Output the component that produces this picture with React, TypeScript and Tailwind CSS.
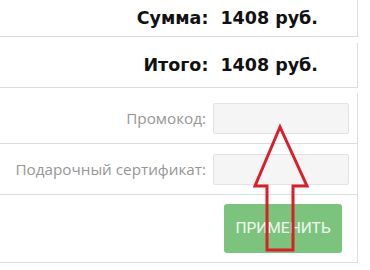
import React from 'react';

const total = '1408 руб.';

const App = () => {
  return (
    <div className="relative w-[370px] h-[270px] overflow-hidden bg-white">
      <div className="flex flex-col w-[358px]">
        {/* Sum */}
        <div className="flex h-[37px] items-center justify-end border-b border-r border-[#dcdcdc] pr-[39px] text-[17.5px] font-bold text-[#111] font-['DejaVu_Sans',sans-serif]">
          <span>Сумма:</span>
          <span className="ml-[12px]">{total}</span>
        </div>

        {/* Total */}
        <div className="mt-[6px] flex h-[45px] items-center justify-end border-b border-r border-[#dcdcdc] pr-[39px] text-[17.5px] font-bold text-[#111] font-['DejaVu_Sans',sans-serif]">
          <span>Итого:</span>
          <span className="ml-[12px]">{total}</span>
        </div>

        {/* Promo */}
        <div className="mt-[5px] flex flex-col border-r border-[#dcdcdc] font-['Open_Sans',sans-serif]">
          <div className="flex h-[51px] items-center justify-end gap-[7px] border-b border-[#dcdcdc] pr-[8px]">
            <label className="text-[15.25px] text-[#969696]">Промокод:</label>
            <div className="h-[31px] w-[136px] rounded-[2px] border border-[#e3e3e3] bg-[#f5f5f5]" />
          </div>
          <div className="flex h-[51px] items-center justify-end gap-[7px] border-b border-[#dcdcdc] pr-[8px]">
            <label className="text-[15.25px] text-[#969696]">Подарочный сертификат:</label>
            <div className="h-[31px] w-[136px] rounded-[2px] border border-[#e3e3e3] bg-[#f5f5f5]" />
          </div>
          <div className="flex h-[68px] justify-end border-b border-[#dcdcdc] pr-[15px] pt-[9px]">
            <button className="h-[49px] w-[118px] rounded-[3px] bg-[#7cc47d] text-[15.5px] text-white/90 font-['Roboto',sans-serif]">
              ПРИМЕНИТЬ
            </button>
          </div>
        </div>
      </div>

      {/* Arrow annotation */}
      <svg className="absolute left-0 top-0" width="370" height="270" viewBox="0 0 370 270">
        <polygon
          points="280,127 255,186 267,186 267,250 293,250 293,186 307,186"
          fill="none"
          stroke="#d8202a"
          strokeWidth="3"
          strokeLinejoin="miter"
        />
      </svg>
    </div>
  );
};

export default App;
